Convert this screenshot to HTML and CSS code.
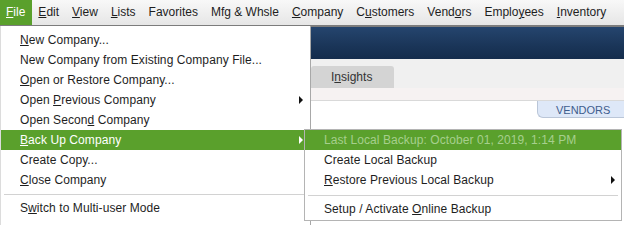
FILE: index.html
```html
<!DOCTYPE html>
<html>
<head>
<meta charset="utf-8">
<link rel="stylesheet" href="styles.css">
</head>
<body>
<div class="screen">
  <nav class="menubar">
    <span class="mb-item active"><u>F</u>ile</span>
    <span class="mb-item"><u>E</u>dit</span>
    <span class="mb-item"><u>V</u>iew</span>
    <span class="mb-item"><u>L</u>ists</span>
    <span class="mb-item">Favorites</span>
    <span class="mb-item">Mfg &amp; Whsle</span>
    <span class="mb-item"><u>C</u>ompany</span>
    <span class="mb-item">C<u>u</u>stomers</span>
    <span class="mb-item">Vend<u>o</u>rs</span>
    <span class="mb-item">Emplo<u>y</u>ees</span>
    <span class="mb-item"><u>I</u>nventory</span>
  </nav>
  <div class="app">
    <div class="banner"></div>
    <div class="tabrow"><div class="tab">I<u>n</u>sights</div></div>
    <div class="strip"></div>
    <div class="content"><div class="vendors">VENDORS</div></div>
  </div>

  <div class="menu file-menu">
    <div class="mi"><span><u>N</u>ew Company...</span></div>
    <div class="mi"><span>New Company from Existing Company File...</span></div>
    <div class="mi"><span><u>O</u>pen or Restore Company...</span></div>
    <div class="mi"><span>Open <u>P</u>revious Company</span><i class="arrow"></i></div>
    <div class="mi"><span>Open Secon<u>d</u> Company</span></div>
    <div class="mi hl"><span><u>B</u>ack Up Company</span><i class="arrow"></i></div>
    <div class="mi"><span>Create Copy...</span></div>
    <div class="mi"><span><u>C</u>lose Company</span></div>
    <div class="sep"></div>
    <div class="mi"><span>S<u>w</u>itch to Multi-user Mode</span></div>
  </div>

  <div class="menu sub-menu">
    <div class="mi hl disabled"><span>Last Local Backup: October 01, 2019, 1:14 PM</span></div>
    <div class="mi"><span>Create Local Backup</span></div>
    <div class="mi"><span><u>R</u>estore Previous Local Backup</span><i class="arrow"></i></div>
    <div class="sep"></div>
    <div class="mi"><span>Setup / Activate <u>O</u>nline Backup</span></div>
  </div>
</div>
</body>
</html>
```

FILE: styles.css
```css
* { box-sizing: border-box; }
html, body { margin: 0; padding: 0; }
body {
  font-family: "Liberation Sans", Arial, sans-serif;
  font-size: 12px;
  color: #1e1e1e;
  background: #fff;
}
u { text-underline-offset: 1px; }

.screen {
  position: relative;
  width: 624px;
  height: 225px;
  overflow: hidden;
  background: #fff;
}

/* menu bar */
.menubar {
  display: flex;
  height: 27px;
  background: linear-gradient(#f8f8f8, #e6e6e6);
  border-bottom: 2px solid #7c7c7c;
}
.mb-item {
  padding: 0 6.5px;
  line-height: 25px;
  height: 25px;
  white-space: nowrap;
}
.mb-item:first-child { padding-left: 6px; }
.mb-item.active {
  background: #5aa02c;
  color: #fff;
}

/* background app */
.banner {
  height: 32px;
  background: linear-gradient(#25456e, #1a3558 60%, #142c4c);
}
.tabrow {
  height: 29px;
  background: #f0f0f0;
  display: flex;
  align-items: flex-end;
  padding-left: 311px;
}
.tab {
  width: 83px;
  height: 22px;
  background: #d4d4d4;
  border-radius: 3px 3px 0 0;
  padding-left: 20px;
  line-height: 22px;
  color: #333;
}
.strip {
  height: 13px;
  background: #f6f2f2;
  border-bottom: 1px solid #d9d9d9;
}
.content {
  display: flex;
  justify-content: flex-end;
}
.vendors {
  width: 87px;
  height: 17px;
  background: #dee8f8;
  border: 1px solid #bac6d8;
  border-top: none;
  border-right: none;
  border-radius: 0 0 0 6px;
  padding-left: 18px;
  font-size: 11px;
  line-height: 18px;
  color: #3f5d8e;
}

/* menus */
.menu {
  position: absolute;
  background: #fff;
  white-space: nowrap;
  letter-spacing: 0.08px;
}
.file-menu {
  left: 0;
  top: 26px;
  width: 311px;
  height: 210px;
  border-left: 1px solid #dcdcdc;
  border-right: 1px solid #a8a8a8;
  padding-top: 4px;
}
.sub-menu {
  left: 304px;
  top: 129px;
  width: 318px;
  border: 1px solid #b4b4b4;
  padding-bottom: 1px;
  z-index: 2;
}
.mi {
  display: flex;
  align-items: center;
  height: 20px;
  padding-left: 19px;
  padding-right: 7px;
}
.sub-menu .mi { padding-left: 19px; padding-right: 6px; }
.mi.hl {
  background: #5aa02c;
  color: #fff;
}
.mi.disabled { color: #a6cf8d; }
.arrow {
  margin-left: auto;
  width: 0;
  height: 0;
  border-left: 4px solid #111;
  border-top: 4px solid transparent;
  border-bottom: 4px solid transparent;
}
.mi.hl .arrow { border-left-color: #fff; }
.sep {
  height: 1px;
  background: #d2d2d2;
  margin: 4px 3px 3px;
}
.sub-menu .sep { margin: 5px 3px 3px; }
```
